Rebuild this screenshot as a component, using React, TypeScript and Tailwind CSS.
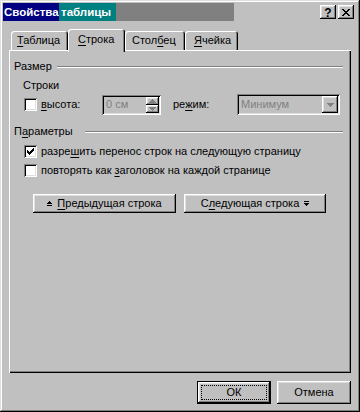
import React from "react";

const raised =
  "shadow-[inset_-1px_-1px_#000,inset_1px_1px_#fff,inset_-2px_-2px_#808080,inset_2px_2px_#dfdfdf]";
const sunken =
  "shadow-[inset_1px_1px_#808080,inset_-1px_-1px_#fff,inset_2px_2px_#000,inset_-2px_-2px_#dfdfdf]";

function U({ children }: { children: React.ReactNode }) {
  return <span className="underline underline-offset-[2px] decoration-1">{children}</span>;
}

function Check({ checked }: { checked?: boolean }) {
  return (
    <div className={`w-[13px] h-[13px] bg-white ${sunken} flex items-center justify-center shrink-0`}>
      {checked && (
        <svg width="7" height="7" viewBox="0 0 7 7" shapeRendering="crispEdges">
          <path
            d="M6 0h1v1h-1zM5 1h2v1h-2zM0 2h1v1h-1zM4 2h3v1h-3zM0 3h2v1h-2zM3 3h3v1h-3zM0 4h5v1h-5zM1 5h3v1h-3zM2 6h1v1h-1z"
            fill="#000"
          />
        </svg>
      )}
    </div>
  );
}

function GroupTitle({ children, w }: { children: React.ReactNode; w: string }) {
  return (
    <div className="flex items-center h-[13px] pl-[5px] pr-[8px]">
      <span className={w}>{children}</span>
      <div className="flex-1 h-[2px] border-t border-t-[#808080] border-b border-b-white" />
    </div>
  );
}

function Tab({ label, selected, w, pl }: { label: React.ReactNode; selected?: boolean; w: string; pl: string }) {
  return (
    <div
      className={`${w} ${pl} ${
        selected ? "h-[23px] pt-[4px] relative z-10" : "h-[19px] mt-[2px] pt-[3px]"
      } bg-[#c0c0c0] rounded-t-[3px] shadow-[inset_1px_1px_#fff,inset_-1px_0_#000,inset_-2px_0_#808080] leading-[13px]`}
    >
      {label}
    </div>
  );
}

function SmallTri({ up, color }: { up?: boolean; color: string }) {
  return (
    <svg width="7" height="4" viewBox="0 0 7 4" shapeRendering="crispEdges">
      <path
        d={up ? "M3 0h1v1h-1zM2 1h3v1h-3zM1 2h5v1h-5zM0 3h7v1h-7z" : "M0 0h7v1h-7zM1 1h5v1h-5zM2 2h3v1h-3zM3 3h1v1h-1z"}
        fill={color}
      />
    </svg>
  );
}

export default function App() {
  return (
    <div
      className={`w-[360px] h-[412px] bg-[#c0c0c0] p-[3px] flex flex-col text-[11px] leading-[13px] text-black font-['Liberation_Sans',Arial,sans-serif] shadow-[inset_-1px_-1px_#000,inset_1px_1px_#dfdfdf,inset_-2px_-2px_#808080,inset_2px_2px_#fff]`}
    >
      {/* Title bar */}
      <div className="h-[18px] flex items-stretch font-bold text-white text-[11.5px] whitespace-nowrap">
        <div className="w-[56px] bg-[#000080] pl-[1px] flex items-center overflow-hidden">Свойства</div>
        <div className="w-[57px] bg-[#008080] pl-[2px] flex items-center overflow-hidden">таблицы</div>
        <div className="w-[118px] bg-[#808080]" />
        <div className="flex-1 flex items-center justify-end gap-[2px] pr-[3px]">
          <div className={`w-[16px] h-[14px] ${raised} flex items-center justify-center text-black text-[12px] leading-none pt-[1px]`}>
            ?
          </div>
          <div className={`w-[16px] h-[14px] ${raised} flex items-center justify-center`}>
            <svg width="8" height="7" viewBox="0 0 8 7" shapeRendering="crispEdges">
              <path
                d="M0 0h2v1h-2zM6 0h2v1h-2zM1 1h2v1h-2zM5 1h2v1h-2zM2 2h4v1h-4zM3 3h2v1h-2zM2 4h4v1h-4zM1 5h2v1h-2zM5 5h2v1h-2zM0 6h2v1h-2zM6 6h2v1h-2z"
                fill="#000"
              />
            </svg>
          </div>
        </div>
      </div>

      {/* Tabs */}
      <div className="mt-[8px] h-[21px] flex items-start pl-[8px]">
        <Tab w="w-[57px]" pl="pl-[6px]" label={<><U>Т</U>аблица</>} />
        <Tab w="w-[57px]" pl="pl-[10px]" selected label={<><U>С</U>трока</>} />
        <Tab w="w-[60px]" pl="pl-[7px]" label={<>Стол<U>б</U>ец</>} />
        <Tab w="w-[53px]" pl="pl-[9px]" label={<><U>Я</U>чейка</>} />
      </div>

      {/* Panel */}
      <div className="ml-[6px] w-[342px] h-[323px] shadow-[inset_1px_1px_#fff,inset_-1px_-1px_#000,inset_-2px_-2px_#808080] flex flex-col">
        <div className="mt-[10px]">
          <GroupTitle w="w-[43px]">Размер</GroupTitle>
        </div>
        <div className="mt-[6px] pl-[14px] h-[13px]">Строки</div>
        <div className="mt-[2px] h-[21px] flex items-center pl-[15px]">
          <Check />
          <span className="ml-[4px] w-[61px]">
            <U>в</U>ысота:
          </span>
          <div className={`w-[59px] h-[20px] ${sunken} p-[2px] flex`}>
            <span className="flex-1 pl-[2px] flex items-center text-[#808080]">0 см</span>
            <div className="w-[13px] flex flex-col">
              <div className={`h-[8px] ${raised} flex items-center justify-center`}>
                <SmallTri up color="#808080" />
              </div>
              <div className={`h-[8px] ${raised} flex items-center justify-center`}>
                <SmallTri color="#808080" />
              </div>
            </div>
          </div>
          <span className="ml-[12px] w-[64px]">
            ре<U>ж</U>им:
          </span>
          <div className={`w-[103px] h-[21px] ${sunken} p-[2px] flex`}>
            <span className="flex-1 pl-[2px] flex items-center text-[#808080]">Минимум</span>
            <div className={`w-[16px] ${raised} flex items-center justify-center`}>
              <SmallTri color="#808080" />
            </div>
          </div>
        </div>

        <div className="mt-[10px]">
          <GroupTitle w="w-[71px]">
            П<U>а</U>раметры
          </GroupTitle>
        </div>
        <div className="mt-[7px] h-[13px] flex items-center pl-[15px]">
          <Check checked />
          <span className="ml-[4px]">
            разре<U>ш</U>ить перенос строк на следующую страницу
          </span>
        </div>
        <div className="mt-[6px] h-[13px] flex items-center pl-[15px]">
          <Check />
          <span className="ml-[4px]">
            повторять как <U>з</U>аголовок на каждой странице
          </span>
        </div>

        <div className="mt-[17px] flex pl-[24px] gap-[8px]">
          <div className={`w-[143px] h-[19px] ${raised} flex items-center justify-center gap-[5px]`}>
            <svg width="5" height="6" viewBox="0 0 5 6" shapeRendering="crispEdges">
              <path d="M2 0h1v1h-1zM1 1h3v1h-3zM0 2h5v1h-5zM0 4h5v1h-5z" fill="#000" />
            </svg>
            <span>
              <U>П</U>редыдущая строка
            </span>
          </div>
          <div className={`w-[142px] h-[19px] ${raised} flex items-center justify-center gap-[5px]`}>
            <span>
              С<U>л</U>едующая строка
            </span>
            <svg width="5" height="6" viewBox="0 0 5 6" shapeRendering="crispEdges">
              <path d="M0 0h5v1h-5zM0 2h5v1h-5zM1 3h3v1h-3zM2 4h1v1h-1z" fill="#000" />
            </svg>
          </div>
        </div>
      </div>

      {/* Footer buttons */}
      <div className="mt-[8px] flex justify-end gap-[6px] pr-[6px]">
        <div className="w-[74px] h-[23px] border border-black">
          <div className={`w-full h-full ${raised} p-[3px]`}>
            <div className="w-full h-full border border-dotted border-black flex items-center justify-center">
              ОК
            </div>
          </div>
        </div>
        <div className={`w-[74px] h-[23px] ${raised} flex items-center justify-center`}>Отмена</div>
      </div>
    </div>
  );
}
